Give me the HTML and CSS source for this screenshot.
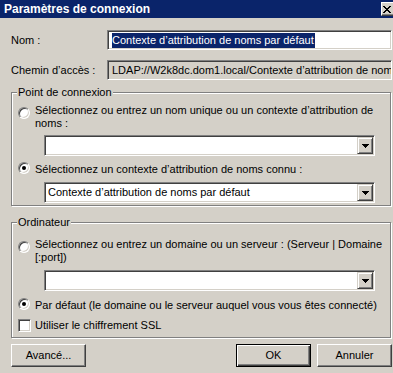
FILE: index.html
```html
<!DOCTYPE html>
<html lang="fr">
<head>
	<meta charset="UTF-8">
	<meta name="viewport" content="width=device-width, initial-scale=1.0">
	<link rel="stylesheet" href="styles.css">
	<title>Paramètres de connexion</title>
</head>
<body>
	<div class="dialog">
		<div class="titlebar">
			<span class="title">Paramètres de connexion</span>
			<span class="close-btn">
				<svg width="8" height="7" viewBox="0 0 8 7"><path d="M0 0h2v1H0zM6 0h2v1H6zM1 1h2v1H1zM5 1h2v1H5zM2 2h4v1H2zM3 3h2v1H3zM2 4h4v1H2zM1 5h2v1H1zM5 5h2v1H5zM0 6h2v1H0zM6 6h2v1H6z"/></svg>
			</span>
		</div>
		<div class="content">
			<div class="field-row">
				<label class="field-label">Nom :</label>
				<div class="textbox"><span class="selected">Contexte d’attribution de noms par défaut</span></div>
			</div>
			<div class="field-row">
				<label class="field-label">Chemin d’accès :</label>
				<div class="textbox readonly">LDAP://W2k8dc.dom1.local/Contexte d’attribution de noms par défaut</div>
			</div>

			<div class="group group-point">
				<div class="group-title">Point de connexion</div>
				<div class="option multi">
					<span class="radio"></span>
					<span class="option-text">Sélectionnez ou entrez un nom unique ou un contexte d’attribution de<br>noms :</span>
				</div>
				<div class="combo combo-first">
					<div class="combo-value"></div>
					<span class="combo-btn"><svg width="7" height="4" viewBox="0 0 7 4"><path d="M0 0h7v1H0zM1 1h5v1H1zM2 2h3v1H2zM3 3h1v1H3z"/></svg></span>
				</div>
				<div class="option single option-known">
					<span class="radio checked"></span>
					<span class="option-text">Sélectionnez un contexte d’attribution de noms connu :</span>
				</div>
				<div class="combo combo-known">
					<div class="combo-value">Contexte d’attribution de noms par défaut</div>
					<span class="combo-btn"><svg width="7" height="4" viewBox="0 0 7 4"><path d="M0 0h7v1H0zM1 1h5v1H1zM2 2h3v1H2zM3 3h1v1H3z"/></svg></span>
				</div>
			</div>

			<div class="group group-computer">
				<div class="group-title">Ordinateur</div>
				<div class="option multi">
					<span class="radio"></span>
					<span class="option-text">Sélectionnez ou entrez un domaine ou un serveur : (Serveur | Domaine<br>[:port])</span>
				</div>
				<div class="combo combo-first">
					<div class="combo-value"></div>
					<span class="combo-btn"><svg width="7" height="4" viewBox="0 0 7 4"><path d="M0 0h7v1H0zM1 1h5v1H1zM2 2h3v1H2zM3 3h1v1H3z"/></svg></span>
				</div>
				<div class="option single option-default">
					<span class="radio checked"></span>
					<span class="option-text">Par défaut (le domaine ou le serveur auquel vous vous êtes connecté)</span>
				</div>
				<div class="option check-row">
					<span class="checkbox"></span>
					<span class="option-text">Utiliser le chiffrement SSL</span>
				</div>
			</div>

			<div class="button-row">
				<button class="btn">Avancé...</button>
				<button class="btn btn-default">OK</button>
				<button class="btn">Annuler</button>
			</div>
		</div>
	</div>
</body>
</html>
```

FILE: styles.css
```css
body {
	margin: 0;
	padding: 0;
	background: #d4d0c8;
	color: #000;
	font-family: "Liberation Sans", Arial, sans-serif;
	font-size: 11px;
	line-height: 13px;
	overflow: hidden;
}

.titlebar {
	height: 18px;
	background: #0a246a;
	color: #fff;
	font-size: 12px;
	font-weight: bold;
	display: flex;
	align-items: center;
	justify-content: space-between;
	padding-left: 4px;
	overflow: hidden;
}

.close-btn {
	flex-shrink: 0;
	width: 16px;
	height: 14px;
	box-sizing: border-box;
	margin-right: -4px;
	padding-left: 1px;
	background: #d4d0c8;
	border: 1px solid;
	border-color: #fff #404040 #404040 #fff;
	box-shadow: inset -1px -1px #808080;
	display: flex;
	align-items: center;
}
.close-btn svg {
	display: block;
	fill: #000;
}

.content {
	padding: 12px 1px 0 11px;
}

.field-row {
	display: flex;
	align-items: center;
}
.field-row + .field-row {
	margin-top: 10px;
}
.field-label {
	width: 96px;
	flex-shrink: 0;
}

.textbox {
	flex: 1;
	min-width: 0;
	height: 20px;
	box-sizing: border-box;
	padding: 0 3px 0 4px;
	background: #fff;
	border: 1px solid;
	border-color: #808080 #fff #fff #808080;
	box-shadow: inset 1px 1px #404040, inset -1px -1px #d4d0c8;
	display: flex;
	align-items: center;
	white-space: nowrap;
	overflow: hidden;
}
.textbox.readonly {
	background: #d4d0c8;
}
.textbox .selected {
	display: inline-block;
	line-height: 15px;
	padding-right: 1px;
	background: #0a246a;
	color: #fff;
}

.group {
	margin: 12px 1px 0 0;
	padding: 0 0 2px 6px;
	border: 1px solid #808080;
	box-shadow: 1px 1px #fff, inset 1px 1px #fff;
}
.group-computer {
	margin-top: 16px;
	padding-bottom: 5px;
}
.group-title {
	width: fit-content;
	margin: -7px 0 0 -1px;
	padding: 0 1px;
	background: #d4d0c8;
}

.option {
	display: flex;
	align-items: flex-start;
	white-space: nowrap;
}
.group-point .option.multi {
	margin-top: 5px;
}
.group-computer .option.multi {
	margin-top: 9px;
}
.option-known {
	margin-top: 7px;
}
.option-default {
	margin-top: 8px;
}
.check-row {
	margin-top: 7px;
}
.option-text {
	margin-left: 5px;
}

.radio {
	flex-shrink: 0;
	width: 12px;
	height: 12px;
	box-sizing: border-box;
	border-radius: 50%;
	background: #fff;
	border: 1px solid;
	border-color: #808080 #fff #fff #808080;
	box-shadow: inset 1px 1px #404040, inset -1px -1px #d4d0c8;
	display: flex;
	align-items: center;
	justify-content: center;
}
.multi .radio {
	margin-top: 3px;
}
.single .radio {
	margin-top: -1px;
}
.radio.checked:after {
	content: '';
	width: 4px;
	height: 4px;
	border-radius: 50%;
	background: #000;
}

.checkbox {
	flex-shrink: 0;
	width: 13px;
	height: 13px;
	box-sizing: border-box;
	background: #fff;
	border: 1px solid;
	border-color: #808080 #fff #fff #808080;
	box-shadow: inset 1px 1px #404040, inset -1px -1px #d4d0c8;
}
.check-row .option-text {
	margin-left: 4px;
}

.combo {
	height: 21px;
	box-sizing: border-box;
	margin: 5px 15px 0 26px;
	padding: 1px;
	background: #fff;
	border: 1px solid;
	border-color: #808080 #fff #fff #808080;
	box-shadow: inset 1px 1px #404040, inset -1px -1px #d4d0c8;
	display: flex;
}
.combo-known {
	margin-top: 6px;
}
.group-computer .combo-first {
	margin-top: 6px;
}
.combo-value {
	flex: 1;
	padding-left: 2px;
	line-height: 17px;
	white-space: nowrap;
	overflow: hidden;
}
.combo-btn {
	width: 16px;
	box-sizing: border-box;
	background: #d4d0c8;
	border: 1px solid;
	border-color: #d4d0c8 #404040 #404040 #d4d0c8;
	box-shadow: inset 1px 1px #fff, inset -1px -1px #808080;
	display: flex;
	align-items: center;
	justify-content: center;
}
.combo-btn svg {
	display: block;
	fill: #000;
}

.button-row {
	display: flex;
	gap: 6px;
	margin-top: 6px;
}
.btn {
	width: 75px;
	height: 23px;
	box-sizing: border-box;
	padding: 0;
	font: inherit;
	color: #000;
	background: #d4d0c8;
	border: 1px solid;
	border-color: #fff #404040 #404040 #fff;
	box-shadow: inset -1px -1px #808080;
}
.btn-default {
	margin-left: auto;
	border-color: #000;
	box-shadow: inset 1px 1px #fff, inset -1px -1px #404040, inset -2px -2px #808080;
}
```
